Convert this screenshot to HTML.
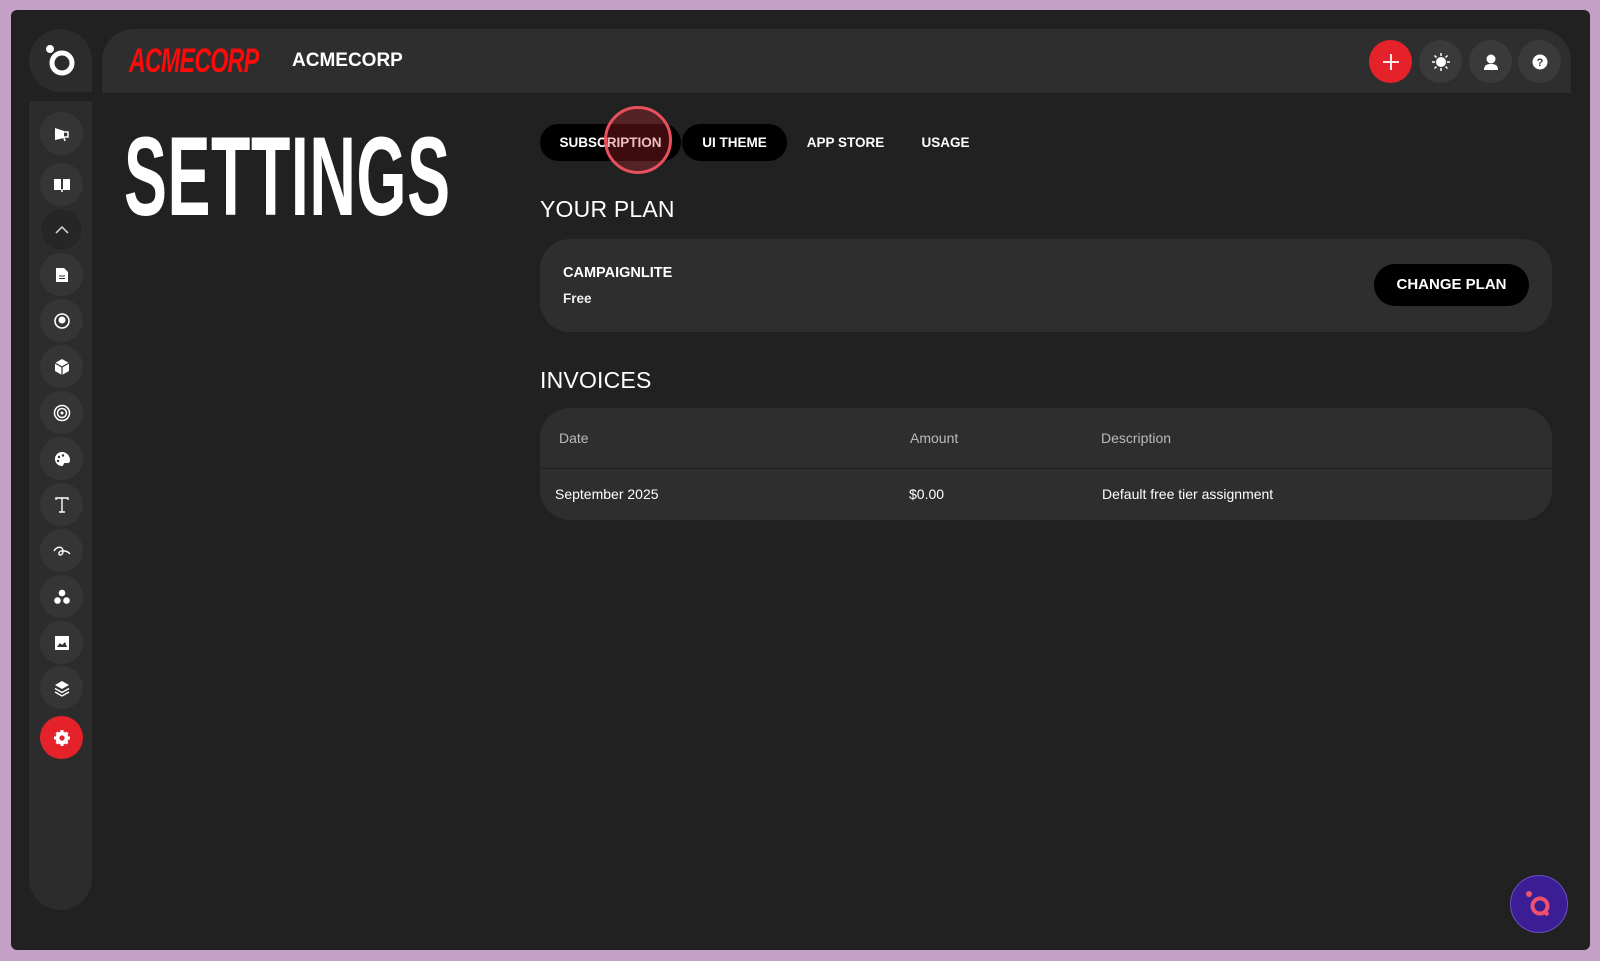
<!DOCTYPE html>
<html><head><meta charset="utf-8"><style>
*{margin:0;padding:0;box-sizing:border-box}
body{width:1600px;height:961px;background:#c4a0c6;font-family:"Liberation Sans",sans-serif;position:relative;overflow:hidden;color:#fff}
.frame{position:absolute;left:11px;top:10px;width:1579px;height:940px;background:#212121;border-radius:6px}
.abs{position:absolute}
.logo{left:29px;top:29px;width:63px;height:63px;border-radius:32px 32px 0 32px;background:#2c2c2c}
.side{left:29px;top:101px;width:63px;height:809px;background:#2c2c2c;border-radius:0 0 32px 32px}
.head{left:102px;top:29px;width:1469px;height:64px;background:#2e2e2e;border-radius:32px 32px 0 0}
.ic{position:absolute;left:40px;width:43px;height:43px;border-radius:50%;background:#353535;display:flex;align-items:center;justify-content:center}
.hb{position:absolute;top:40px;width:43px;height:43px;border-radius:50%;background:#3a3a3a;display:flex;align-items:center;justify-content:center}
.tab{position:absolute;top:124px;height:37px;border-radius:19px;font-weight:bold;font-size:13.5px;line-height:37px;text-align:center}
.h2{position:absolute;left:540px;font-size:23px;letter-spacing:.2px}
.card{position:absolute;left:540px;width:1012px;background:#2e2e2e;border-radius:30px}
.t{position:absolute;font-size:14px}
</style></head><body>
<div class="frame"></div>
<div class="abs logo"><svg width="63" height="63" viewBox="0 0 63 63"><circle cx="21" cy="20" r="4" fill="#fff"/><circle cx="33" cy="34" r="10" fill="none" stroke="#fff" stroke-width="5"/></svg></div>
<div class="abs side"></div>
<div class="abs head"></div>
<div class="abs" style="left:129px;top:42px;font-size:34px;font-weight:bold;font-style:italic;color:#ff0a0a;transform:scaleX(.68);transform-origin:left;letter-spacing:-1px">ACMECORP</div>
<div class="abs" style="left:292px;top:50px;font-size:19px;font-weight:bold">ACMECORP</div>

<div class="hb" style="left:1369px;background:#e5222a"><svg width="20" height="20"><path d="M10 2v16M2 10h16" stroke="#fff" stroke-width="1.8"/></svg></div>
<div class="hb" style="left:1419px"><svg width="20" height="20"><circle cx="10" cy="10" r="5" fill="#fff"/><path d="M10 1v3M10 16v3M1 10h3M16 10h3M3.5 3.5l2 2M14.5 14.5l2 2M3.5 16.5l2-2M14.5 5.5l2-2" stroke="#fff" stroke-width="1.5"/></svg></div>
<div class="hb" style="left:1469px"><svg width="18" height="18"><circle cx="9" cy="6" r="4.5" fill="#fff"/><path d="M2 17c0-5 3-6 7-6s7 1 7 6z" fill="#fff"/></svg></div>
<div class="hb" style="left:1518px"><svg width="18" height="18"><circle cx="9" cy="9" r="7.5" fill="#fff"/><text x="9" y="13" font-size="11" font-weight="bold" text-anchor="middle" fill="#333" font-family="Liberation Sans">?</text></svg></div>

<div class="ic" style="top:112px"><svg width="18" height="16"><path d="M2 2l9 3v7l-9 2z" fill="#fff"/><path d="M11 6h4v5h-4" fill="none" stroke="#fff" stroke-width="1.5"/><path d="M11 12l1 3" stroke="#fff" stroke-width="1.5"/></svg></div>
<div class="ic" style="top:163px"><svg width="18" height="16"><path d="M1 2h7v11H1zM10 2h7v11h-7z" fill="#fff"/><path d="M9 12v3" stroke="#fff" stroke-width="1.5"/></svg></div>
<div class="ic" style="top:208px;background:#262626;border:1px solid #2f2f2f"><svg width="16" height="10"><path d="M2 8l6-6 6 6" fill="none" stroke="#ddd" stroke-width="1.5"/></svg></div>
<div class="ic" style="top:253px"><svg width="14" height="16"><path d="M1 1h8l4 4v10H1z" fill="#fff"/><path d="M4 9h6M4 11.5h6" stroke="#333"/></svg></div>
<div class="ic" style="top:299px"><svg width="18" height="18"><circle cx="9" cy="9" r="7" fill="none" stroke="#fff" stroke-width="1.6"/><circle cx="9" cy="8" r="3.5" fill="#fff"/></svg></div>
<div class="ic" style="top:345px"><svg width="18" height="18"><path d="M9 1l7 4v8l-7 4-7-4V5z" fill="#fff"/><path d="M2 5l7 4 7-4M9 9v8" stroke="#333" stroke-width="1.2" fill="none"/></svg></div>
<div class="ic" style="top:391px"><svg width="18" height="18"><circle cx="9" cy="9" r="7.5" fill="none" stroke="#fff" stroke-width="1.5"/><circle cx="9" cy="9" r="4.5" fill="none" stroke="#fff" stroke-width="1.5"/><circle cx="9" cy="9" r="1.5" fill="#fff"/></svg></div>
<div class="ic" style="top:437px"><svg width="18" height="18"><path d="M9 2a7 7 0 1 0 0 14c2 0 1-3 3-3h3c1 0 2-1 2-3A8 8 0 0 0 9 2z" fill="#fff"/><circle cx="6" cy="7" r="1.2" fill="#333"/><circle cx="10" cy="5.5" r="1.2" fill="#333"/><circle cx="5" cy="11" r="1.2" fill="#333"/></svg></div>
<div class="ic" style="top:483px"><svg width="16" height="16"><path d="M2 3V1h12v2M8 1v14M5 15h6" fill="none" stroke="#fff" stroke-width="1.4"/></svg></div>
<div class="ic" style="top:529px"><svg width="20" height="16"><path d="M2 8c3-5 9-5 9 0s-5 5-4 2 8-3 11 1" fill="none" stroke="#fff" stroke-width="1.4"/></svg></div>
<div class="ic" style="top:575px"><svg width="18" height="18"><circle cx="9" cy="5" r="3.3" fill="#fff"/><circle cx="4.5" cy="12.5" r="3.3" fill="#fff"/><circle cx="13.5" cy="12.5" r="3.3" fill="#fff"/></svg></div>
<div class="ic" style="top:621px"><svg width="16" height="16"><rect x="1" y="1" width="14" height="14" fill="#fff"/><path d="M3 12l3-4 2 2 3-3 2 5z" fill="#333"/></svg></div>
<div class="ic" style="top:666px"><svg width="18" height="18"><path d="M9 2l7 4-7 4-7-4z" fill="#fff"/><path d="M2 9.5l7 4 7-4M2 13l7 4 7-4" fill="none" stroke="#fff" stroke-width="1.4"/></svg></div>
<div class="ic" style="top:716px;background:#e5222a"><svg width="18" height="18"><circle cx="9" cy="9" r="6.5" fill="#fff"/><path d="M9 1v16M1 9h16M3.5 3.5l11 11M3.5 14.5l11-11" stroke="#fff" stroke-width="3"/><circle cx="9" cy="9" r="2.6" fill="#e5222a"/></svg></div>

<div class="abs" style="left:124px;top:117px;font-size:112px;font-weight:bold;transform:scaleX(.575);transform-origin:left;letter-spacing:1px;line-height:120px">SETTINGS</div>

<div class="tab" style="left:540px;width:141px;background:#000">SUBSCRIPTION</div>
<div class="tab" style="left:682px;width:105px;background:#000">UI THEME</div>
<div class="tab" style="left:793px;width:105px">APP STORE</div>
<div class="tab" style="left:903px;width:85px">USAGE</div>
<div class="abs" style="left:604px;top:106px;width:68px;height:68px;border-radius:50%;border:3px solid #e8505c;background:rgba(200,40,50,.3)"></div>

<div class="h2" style="top:196px">YOUR PLAN</div>
<div class="card" style="top:239px;height:93px"></div>
<div class="t" style="left:563px;top:265px;font-weight:bold;font-size:14.5px">CAMPAIGNLITE</div>
<div class="t" style="left:563px;top:291px;font-size:13.5px;font-weight:bold;color:#eee">Free</div>
<div class="abs" style="left:1374px;top:264px;width:155px;height:42px;border-radius:21px;background:#000;font-weight:bold;font-size:15px;line-height:42px;text-align:center">CHANGE PLAN</div>

<div class="h2" style="top:367px">INVOICES</div>
<div class="card" style="top:408px;height:112px"></div>
<div class="abs" style="left:540px;top:468px;width:1012px;height:1px;background:#1f1f1f"></div>
<div class="t" style="left:559px;top:430px;color:#bbb">Date</div>
<div class="t" style="left:910px;top:430px;color:#bbb">Amount</div>
<div class="t" style="left:1101px;top:430px;color:#bbb">Description</div>
<div class="t" style="left:555px;top:486px">September 2025</div>
<div class="t" style="left:909px;top:486px">$0.00</div>
<div class="t" style="left:1102px;top:486px">Default free tier assignment</div>

<div class="abs" style="left:1510px;top:875px;width:58px;height:58px;border-radius:50%;background:#3b1e96;border:1px solid #6a4fc0"><svg width="58" height="58"><circle cx="18" cy="18" r="3" fill="#f0506e"/><circle cx="29" cy="30" r="7.5" fill="none" stroke="#f0506e" stroke-width="4"/><path d="M33 35l4 4" stroke="#f0506e" stroke-width="4"/></svg></div>
</body></html>
